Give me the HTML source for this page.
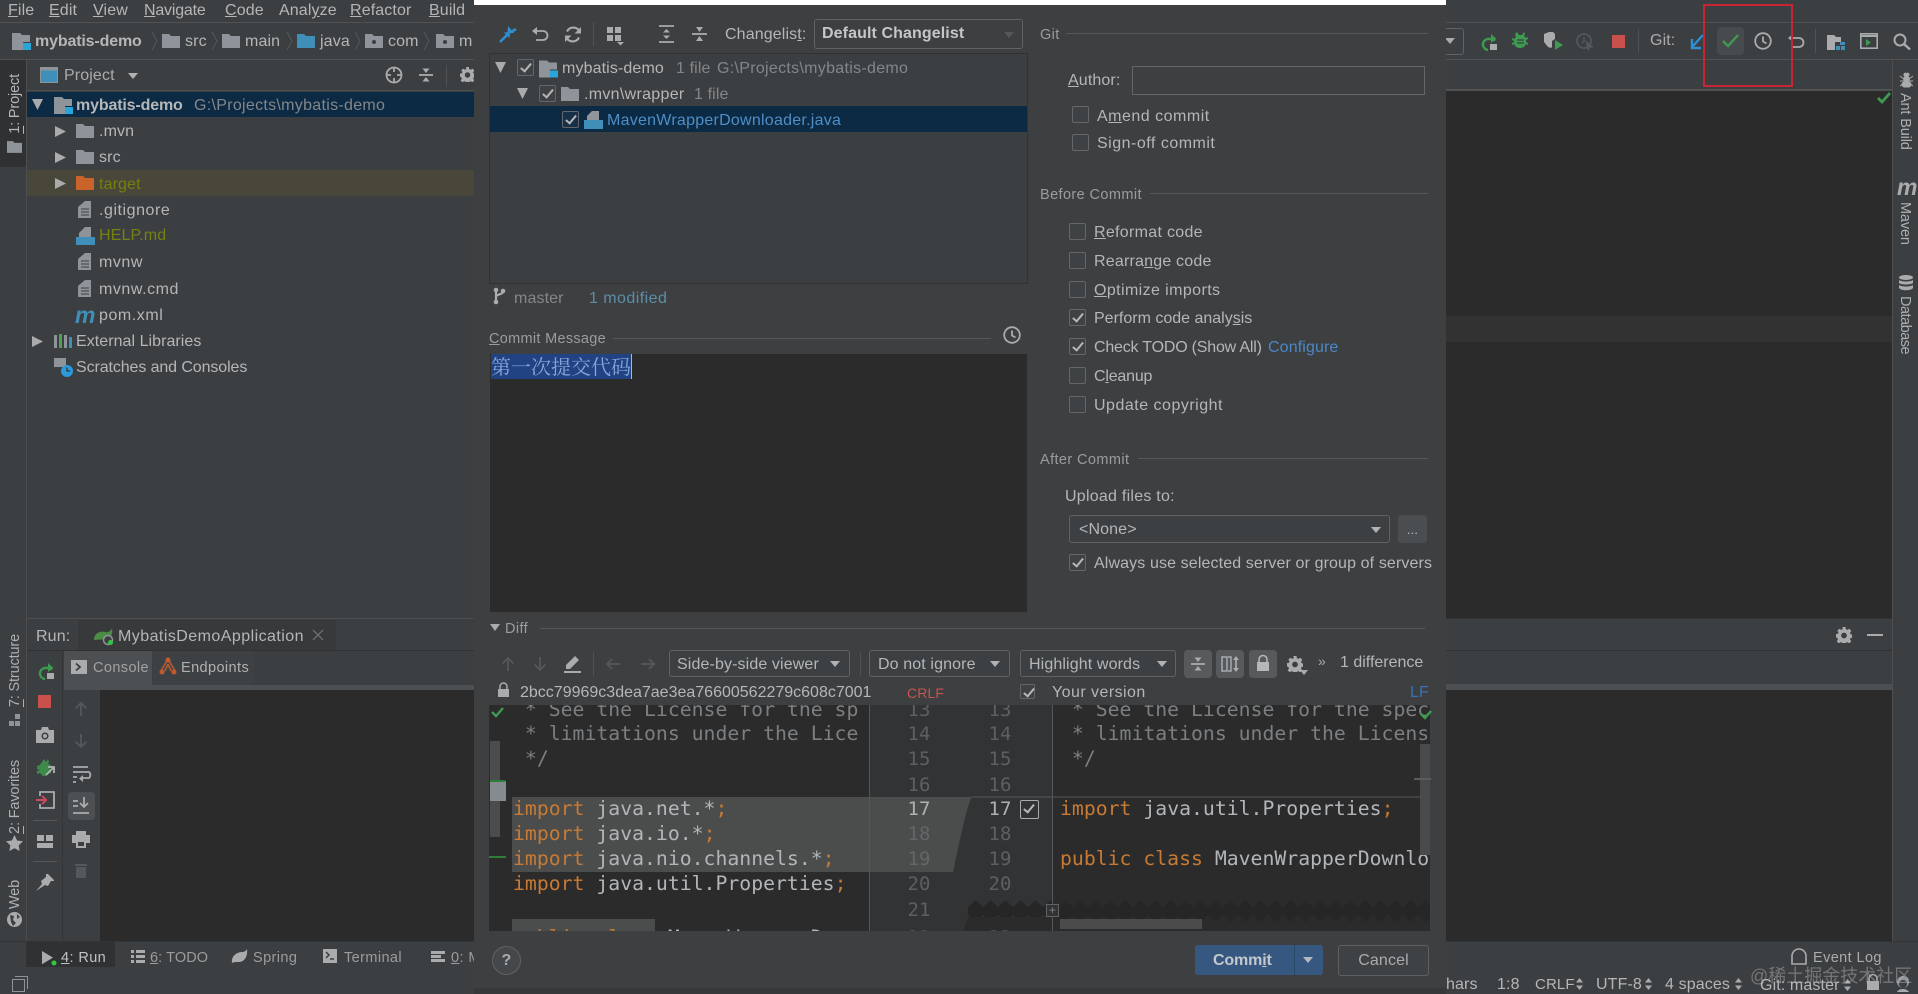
<!DOCTYPE html>
<html><head><meta charset="utf-8"><style>
html,body{margin:0;padding:0;width:1918px;height:994px;overflow:hidden;background:#3c3f41}
body{position:relative;font-family:"Liberation Sans","Noto Sans CJK SC",sans-serif;font-size:16px;letter-spacing:.12px;color:#b4b6b8}
.a{position:absolute}
.t{position:absolute;white-space:nowrap;line-height:20px;height:20px;margin-top:1px}
.b{font-weight:bold;letter-spacing:-.15px}
.s{font-size:14.500px;color:#9a9c9e;letter-spacing:.4px}
.g{color:#83878a;letter-spacing:.3px}
.w{letter-spacing:.55px}
.cb{position:absolute;width:15px;height:15px;border:1px solid #646669;border-radius:2px;background:#3f4244}
.cb.on::after{content:"";position:absolute;left:5px;top:1px;width:4px;height:9px;border-right:2px solid #b5b7b9;border-bottom:2px solid #b5b7b9;transform:rotate(40deg)}
.ln{position:absolute;height:1px;background:#555759}
.combo{position:absolute;box-sizing:border-box;border:1px solid #606264;border-radius:3px;background:#3d4042}
.arr{position:absolute;width:0;height:0;border-left:5px solid transparent;border-right:5px solid transparent;border-top:6px solid #b0b2b4}
.rt{position:absolute;white-space:nowrap;writing-mode:vertical-rl;line-height:20px;width:20px;font-size:14.500px;letter-spacing:-.15px;color:#aeb0b2}
.lt{transform:rotate(180deg)}
.tb{position:absolute;background:#565a5c;border-radius:4px}
svg.i{position:absolute;overflow:visible}
.clip{position:absolute;overflow:hidden}
.c{position:absolute;left:0;white-space:pre;font-family:"DejaVu Sans Mono",monospace;font-size:19.800px;letter-spacing:0;line-height:24px;height:24px;color:#b2b6ba}
.c i{font-style:normal;color:#c77a33}
.cm{color:#7c7f82}
.n{position:absolute;width:24px;text-align:center;font-family:"DejaVu Sans Mono",monospace;font-size:19px;letter-spacing:0;line-height:24px;color:#5c6063}
</style></head><body>
<svg width="0" height="0" style="position:absolute"><defs>
<symbol id="fo" viewBox="0 0 18 14"><path d="M0 0h7l2 2h9v12H0z" fill="#8e9499"/></symbol>
<symbol id="fb" viewBox="0 0 18 14"><path d="M0 0h7l2 2h9v12H0z" fill="#3f8fb8"/></symbol>
<symbol id="fp" viewBox="0 0 18 14"><path d="M0 0h7l2 2h9v12H0z" fill="#8e9499"/><circle cx="9" cy="8" r="2" fill="#3c3f41"/></symbol>
<symbol id="mod" viewBox="0 0 19 17"><path d="M0 0h8l2 2h8v7h-7v8H0z" fill="#8e9499"/><rect x="11" y="10" width="8" height="7" fill="#29a5d8"/></symbol>
<symbol id="file" viewBox="0 0 14 17"><path d="M7 0h6v17H0V6z" fill="#8e9499"/><path d="M3 8h8M3 11h8M3 14h8" stroke="#3c3f41"/></symbol>
<symbol id="gear" viewBox="0 0 16 16"><path fill-rule="evenodd" d="M6.500 0h3l.4 2.200 1.500.7L13.300 1.700l2 2.200-1.300 1.800.6 1.500 2.200.4v3l-2.200.4-.6 1.500 1.300 1.800-2 2.100-1.900-1.300-1.500.7-.4 2.200h-3l-.4-2.200-1.500-.7-1.900 1.300-2-2.100 1.300-1.800-.6-1.500L-.2 10.100v-3l2.200-.4.600-1.500L1.300 3.900l2-2.200 1.900 1.200 1.500-.7zM8 5.600a2.900 2.900 0 1 0 0 5.800 2.900 2.900 0 0 0 0-5.800z" fill="#a9abad"/></symbol>
<symbol id="co" viewBox="0 0 16 16"><path d="M1 8h14" stroke="#a9abad" stroke-width="1.800"/><path d="M8 6L4.500 1.500h7zM8 10l3.500 4.500h-7z" fill="#a9abad"/></symbol>
<symbol id="clk" viewBox="0 0 18 18"><circle cx="9" cy="9" r="7.800" fill="none" stroke="#a9abad" stroke-width="1.800"/><path d="M9 4.500V9.500l3.500 2" fill="none" stroke="#a9abad" stroke-width="1.800"/></symbol>
<symbol id="rr" viewBox="0 0 18 18"><path d="M14 8V6H9a5.500 5.500 0 0 0-1 11" fill="none" stroke="#3e9a50" stroke-width="2.400"/><path d="M11 1l5.500 5L11 10z" fill="#3e9a50"/><rect x="10" y="11" width="7" height="6" fill="#a9abad"/></symbol>
<symbol id="stop" viewBox="0 0 13 13"><rect width="13" height="13" fill="#c9504b"/></symbol>
<symbol id="up" viewBox="0 0 14 16"><path d="M7 15V2M1.500 7.500L7 2l5.500 5.500" fill="none" stroke="#55585a" stroke-width="1.800"/></symbol>
<symbol id="dn" viewBox="0 0 14 16"><path d="M7 1v13M1.500 8.500L7 14l5.500-5.500" fill="none" stroke="#55585a" stroke-width="1.800"/></symbol>
</defs></svg>

<!-- top menu -->
<div class="t" style="left:8px;top:0"><u>F</u>ile</div>
<div class="t" style="left:49px;top:0"><u>E</u>dit</div>
<div class="t" style="left:93px;top:0"><u>V</u>iew</div>
<div class="t" style="left:144px;top:0;letter-spacing:-.2px"><u>N</u>avigate</div>
<div class="t" style="left:225px;top:0"><u>C</u>ode</div>
<div class="t" style="left:279px;top:0">Anal<u>y</u>ze</div>
<div class="t" style="left:350px;top:0"><u>R</u>efactor</div>
<div class="t" style="left:429px;top:0"><u>B</u>uild</div>
<div class="ln" style="left:0;top:22px;width:1918px;background:#505254"></div>
<!-- breadcrumb -->
<svg class="i" style="left:12px;top:33px" width="19" height="17"><use href="#mod"/></svg>
<div class="t b" style="left:35px;top:31px">mybatis-demo</div>
<svg class="i" style="left:152px;top:32px" width="6" height="18"><path d="M0 0l5 9-5 9" fill="none" stroke="#55585a"/></svg>
<svg class="i" style="left:162px;top:34px" width="18" height="14"><use href="#fo"/></svg>
<div class="t" style="left:185px;top:31px">src</div>
<svg class="i" style="left:212px;top:32px" width="6" height="18"><path d="M0 0l5 9-5 9" fill="none" stroke="#55585a"/></svg>
<svg class="i" style="left:222px;top:34px" width="18" height="14"><use href="#fo"/></svg>
<div class="t" style="left:245px;top:31px">main</div>
<svg class="i" style="left:287px;top:32px" width="6" height="18"><path d="M0 0l5 9-5 9" fill="none" stroke="#55585a"/></svg>
<svg class="i" style="left:297px;top:34px" width="18" height="14"><use href="#fb"/></svg>
<div class="t" style="left:320px;top:31px">java</div>
<svg class="i" style="left:355px;top:32px" width="6" height="18"><path d="M0 0l5 9-5 9" fill="none" stroke="#55585a"/></svg>
<svg class="i" style="left:365px;top:34px" width="18" height="14"><use href="#fp"/></svg>
<div class="t" style="left:388px;top:31px">com</div>
<svg class="i" style="left:424px;top:32px" width="6" height="18"><path d="M0 0l5 9-5 9" fill="none" stroke="#55585a"/></svg>
<svg class="i" style="left:436px;top:34px" width="18" height="14"><use href="#fp"/></svg>
<div class="t" style="left:459px;top:31px">m</div>
<div class="ln" style="left:0;top:59px;width:1918px;background:#505254"></div>

<!-- left stripe -->
<div class="a" style="left:0;top:60px;width:26px;height:107px;background:#2f3133"></div>
<div class="a" style="left:26px;top:60px;width:1px;height:881px;background:#4c4e50"></div>
<div class="rt lt" style="left:5px;top:74px;color:#b4b6b8"><u>1</u>: Project</div>
<svg class="i" style="left:7px;top:141px" width="15" height="12"><use href="#fo"/></svg>
<div class="rt lt" style="left:5px;top:634px"><u>7</u>: Structure</div>
<svg class="i" style="left:8px;top:714px" width="13" height="13"><path d="M7 0h5v5H7zM1 7h5v5H1zM7 7h5v5H7z" fill="#8e9499"/></svg>
<div class="rt lt" style="left:5px;top:760px"><u>2</u>: Favorites</div>
<svg class="i" style="left:6px;top:835px" width="17" height="16"><path d="M8.500 0l2.600 5.500 5.900.8-4.300 4.100 1 5.600-5.200-2.800L3.300 16l1-5.600L0 6.300l5.900-.8z" fill="#a9abad"/></svg>
<div class="rt lt" style="left:5px;top:880px">Web</div>
<svg class="i" style="left:7px;top:912px" width="15" height="15"><circle cx="7.500" cy="7.500" r="7.500" fill="#a9abad"/><path d="M3 3l4 1-1 4 3 3-3 3-2-4zM10 2l3 3-3 2z" fill="#3c3f41"/></svg>

<!-- project header -->
<svg class="i" style="left:40px;top:67px" width="18" height="16"><rect x=".5" y=".5" width="17" height="15" fill="#3f8fb8" stroke="#8e9499"/><rect x=".5" y=".5" width="17" height="3" fill="#8e9499"/></svg>
<div class="t" style="left:64px;top:65px;color:#a9abad">Project</div>
<div class="arr" style="left:128px;top:73px"></div>
<svg class="i" style="left:385px;top:66px" width="18" height="18"><circle cx="9" cy="9" r="7.500" fill="none" stroke="#a9abad" stroke-width="1.800"/><path d="M9 1v5M9 12v5M1 9h5M12 9h5" stroke="#a9abad" stroke-width="1.800"/></svg>
<svg class="i" style="left:418px;top:67px" width="16" height="16"><use href="#co"/></svg>
<div class="a" style="left:446px;top:65px;width:1px;height:22px;background:#505254"></div>
<svg class="i" style="left:460px;top:67px" width="15" height="15"><use href="#gear"/></svg>
<div class="ln" style="left:27px;top:90px;width:447px;background:#4c4e50"></div>

<!-- project tree -->
<div class="a" style="left:27px;top:92px;width:447px;height:25px;background:#0c2a43"></div>
<div class="a" style="left:27px;top:170px;width:447px;height:26px;background:#49473a"></div>
<svg class="i" style="left:32px;top:99px" width="11" height="11"><path d="M0 0h11L5.500 11z" fill="#a9abad"/></svg>
<svg class="i" style="left:54px;top:97px" width="19" height="17"><use href="#mod"/></svg>
<div class="t b" style="left:76px;top:95px">mybatis-demo</div>
<div class="t g" style="left:194px;top:95px">G:\Projects\mybatis-demo</div>
<svg class="i" style="left:55px;top:126px" width="11" height="11"><path d="M0 0l11 5.500L0 11z" fill="#a9abad"/></svg>
<svg class="i" style="left:76px;top:124px" width="18" height="14"><use href="#fo"/></svg>
<div class="t" style="left:99px;top:121px">.mvn</div>
<svg class="i" style="left:55px;top:152px" width="11" height="11"><path d="M0 0l11 5.500L0 11z" fill="#a9abad"/></svg>
<svg class="i" style="left:76px;top:150px" width="18" height="14"><use href="#fo"/></svg>
<div class="t" style="left:99px;top:147px">src</div>
<svg class="i" style="left:55px;top:178px" width="11" height="11"><path d="M0 0l11 5.500L0 11z" fill="#a9abad"/></svg>
<svg class="i" style="left:76px;top:176px" width="18" height="14"><path d="M0 0h7l2 2h9v12H0z" fill="#c9632a"/></svg>
<div class="t" style="left:99px;top:174px;color:#75800f">target</div>
<svg class="i" style="left:78px;top:201px" width="14" height="17"><use href="#file"/></svg>
<div class="t w" style="left:99px;top:200px">.gitignore</div>
<svg class="i" style="left:76px;top:227px" width="19" height="18"><path d="M9 0h6v10H3V6z" fill="#8e9499"/><rect y="10" width="19" height="8" fill="#3f8fb8"/></svg>
<div class="t" style="left:99px;top:225px;color:#75800f">HELP.md</div>
<svg class="i" style="left:78px;top:253px" width="14" height="17"><use href="#file"/></svg>
<div class="t w" style="left:99px;top:252px">mvnw</div>
<svg class="i" style="left:78px;top:280px" width="14" height="17"><use href="#file"/></svg>
<div class="t w" style="left:99px;top:279px">mvnw.cmd</div>
<div class="t" style="left:75px;top:304px;font-size:23px;font-weight:bold;font-style:italic;color:#3f8fb8">m</div>
<div class="t w" style="left:99px;top:305px">pom.xml</div>
<svg class="i" style="left:32px;top:336px" width="11" height="11"><path d="M0 0l11 5.500L0 11z" fill="#a9abad"/></svg>
<svg class="i" style="left:54px;top:334px" width="18" height="14"><path d="M0 1h3v13H0z" fill="#8e9499"/><path d="M5 0h3v14H5z" fill="#4ea053"/><path d="M10 1h3v13h-3z" fill="#8e9499"/><path d="M15 3h3v11h-3z" fill="#3f8fb8"/></svg>
<div class="t" style="left:76px;top:331px;letter-spacing:.05px">External Libraries</div>
<svg class="i" style="left:54px;top:358px" width="19" height="19"><path d="M0 0h12v9H0z" fill="#8e9499"/><circle cx="13" cy="13" r="6" fill="#2a9bd8"/><path d="M13 9.500V13h3" stroke="#3c3f41" fill="none" stroke-width="1.400"/></svg>
<div class="t" style="left:76px;top:357px;letter-spacing:-.1px">Scratches and Consoles</div>

<!-- run panel -->
<div class="a" style="left:27px;top:618px;width:447px;height:1px;background:#4c4e50"></div>
<div class="a" style="left:78px;top:620px;width:258px;height:30px;background:#37393b"></div>
<div class="t" style="left:36px;top:626px">Run:</div>
<svg class="i" style="left:94px;top:628px" width="20" height="17"><path d="M0 12C0 4 8 3 11 4 14 5 17 3 18 0c1 6-1 10-5 11z" fill="#4c8c45"/><circle cx="14" cy="12" r="4.500" fill="#3c3f41" stroke="#8e9499" stroke-width="1.500"/><circle cx="16.500" cy="14.500" r="2.500" fill="#31c740"/></svg>
<div class="t" style="left:118px;top:626px;letter-spacing:.45px">MybatisDemoApplication</div>
<svg class="i" style="left:313px;top:630px" width="10" height="10"><path d="M0 0l10 10M10 0L0 10" stroke="#6c6e70" stroke-width="1.300"/></svg>
<div class="ln" style="left:27px;top:650px;width:447px;background:#303234"></div>
<div class="a" style="left:64px;top:651px;width:88px;height:34px;background:#4c5052"></div>
<div class="a" style="left:153px;top:651px;width:101px;height:34px;background:#3e4143"></div>
<div class="a" style="left:64px;top:685px;width:410px;height:5px;background:#4c5052"></div>
<svg class="i" style="left:71px;top:660px" width="16" height="14"><rect width="16" height="14" fill="#a9abad"/><path d="M5 3.500L9 7 5 10.500" fill="none" stroke="#3c3f41" stroke-width="1.800"/></svg>
<div class="t s" style="left:93px;top:657px;color:#a0a2a4">Console</div>
<svg class="i" style="left:159px;top:657px" width="18" height="18"><path d="M9 2L2 14M9 2l7 12M9 7l-3 7M9 7l3 7" stroke="#b85a30" stroke-width="1.600" fill="none"/><circle cx="9" cy="3" r="2.500" fill="#c25a30"/><circle cx="3" cy="15" r="2.500" fill="#c25a30"/><circle cx="15" cy="15" r="2.500" fill="#c25a30"/></svg>
<div class="t s" style="left:181px;top:657px;color:#aeb0b2">Endpoints</div>
<div class="a" style="left:100px;top:690px;width:374px;height:251px;background:#2b2b2b"></div>
<div class="a" style="left:62px;top:651px;width:1px;height:290px;background:#333537"></div>
<svg class="i" style="left:37px;top:662px" width="18" height="18"><use href="#rr"/></svg>
<svg class="i" style="left:38px;top:695px" width="13" height="13"><use href="#stop"/></svg>
<svg class="i" style="left:36px;top:727px" width="18" height="16"><path d="M0 3h5l1-3h6l1 3h5v13H0z" fill="#a9abad"/><circle cx="9" cy="9" r="3.500" fill="#3c3f41"/><circle cx="9" cy="9" r="2" fill="#a9abad"/></svg>
<svg class="i" style="left:37px;top:759px" width="18" height="18"><path d="M7 0l2 3 2-3 1 3-1 2 3 1v3l-2 1 2 1v3l-3 1-2 2H6L3 14l-3 1v-3l3-1-3-1V7l3-1z" fill="#3e8a4a"/><path d="M9 16l7-7M11 8h6v6" stroke="#b0b2b4" stroke-width="1.800" fill="none"/></svg>
<svg class="i" style="left:36px;top:791px" width="19" height="18"><path d="M4 5V1h14v16H4v-4" fill="none" stroke="#a9abad" stroke-width="1.800"/><path d="M0 9h9M6 5l4 4-4 4" fill="none" stroke="#c94a5a" stroke-width="2"/></svg>
<div class="ln" style="left:33px;top:820px;width:24px"></div>
<svg class="i" style="left:37px;top:835px" width="16" height="13"><path d="M0 0h7v6H0zM9 0h7v6H9zM0 8h16v5H0z" fill="#a9abad"/></svg>
<div class="ln" style="left:33px;top:861px;width:24px"></div>
<svg class="i" style="left:36px;top:873px" width="18" height="18"><path d="M0 18l6-7-1-3 5-4V1h2l6 6v1h-3l-3 5-3-1z" fill="#a9abad"/></svg>
<svg class="i" style="left:74px;top:701px" width="14" height="16"><use href="#up"/></svg>
<svg class="i" style="left:74px;top:733px" width="14" height="16"><use href="#dn"/></svg>
<svg class="i" style="left:73px;top:766px" width="17" height="17"><path d="M0 1h15M0 6h16v0a4 4 0 0 1 0 6h-7M0 11h4M0 16h3" fill="none" stroke="#a9abad" stroke-width="1.800"/><path d="M10 9l-4 3.500 4 3.500z" fill="#a9abad"/></svg>
<div class="tb" style="left:68px;top:792px;width:27px;height:28px;background:#4c5052"></div>
<svg class="i" style="left:73px;top:797px" width="17" height="17"><path d="M0 16h16M0 4h5M0 9h5M11 0v9M7 6l4 4 4-4" fill="none" stroke="#a9abad" stroke-width="1.800"/></svg>
<svg class="i" style="left:72px;top:831px" width="18" height="17"><path d="M4 0h10v4h4v8h-4v5H4v-5H0V4h4z" fill="#a9abad"/><rect x="6" y="11" width="6" height="4" fill="#3c3f41"/></svg>
<svg class="i" style="left:75px;top:862px" width="12" height="16"><path d="M0 2h12v2H0zM1 5h10v11H1z" fill="#55585a"/></svg>

<!-- bottom tool bar -->
<div class="ln" style="left:0;top:941px;width:1918px;background:#323436"></div>
<div class="a" style="left:26px;top:942px;width:89px;height:25px;background:#2f3133"></div>
<svg class="i" style="left:42px;top:951px" width="14" height="14"><path d="M0 0l10 6-10 6z" fill="#a9abad" transform="scale(1.100)"/><circle cx="12" cy="12" r="2.500" fill="#31c740"/></svg>
<div class="t s" style="left:61px;top:947px;color:#c0c2c4"><u>4</u>: Run</div>
<svg class="i" style="left:131px;top:950px" width="14" height="13"><path d="M0 0h3v3H0zM0 5h3v3H0zM0 10h3v3H0zM5 0h9v3H5zM5 5h9v3H5zM5 10h9v3H5z" fill="#a9abad"/></svg>
<div class="t s" style="left:150px;top:947px;letter-spacing:.1px"><u>6</u>: TODO</div>
<svg class="i" style="left:232px;top:949px" width="15" height="14"><path d="M0 14C-1 6 6 3 10 3c2 0 4-1 5-3 1 8-3 13-8 13-3 0-5 0-7 1z" fill="#a9abad"/></svg>
<div class="t s" style="left:253px;top:947px">Spring</div>
<svg class="i" style="left:323px;top:949px" width="14" height="14"><rect width="14" height="14" fill="#a9abad"/><path d="M3 3l3 3-3 3M7 10h4" fill="none" stroke="#3c3f41" stroke-width="1.500"/></svg>
<div class="t s" style="left:344px;top:947px">Terminal</div>
<svg class="i" style="left:431px;top:951px" width="14" height="12"><path d="M0 0h14v3H0zM0 4h10v3H0zM0 8h14v3H0z" fill="#a9abad"/></svg>
<div class="t s" style="left:451px;top:947px"><u>0</u>: M</div>
<svg class="i" style="left:12px;top:976px" width="16" height="16"><path d="M3 .5h12.500V13M.5 3.500h12v12H.5z" fill="none" stroke="#8e9499"/></svg>

<!-- editor right -->
<div class="a" style="left:1446px;top:91px;width:446px;height:527px;background:#2b2b2b"></div>
<div class="a" style="left:1446px;top:316px;width:446px;height:26px;background:#323232"></div>
<div class="a" style="left:1446px;top:618px;width:446px;height:1px;background:#323436"></div>
<div class="a" style="left:1446px;top:690px;width:446px;height:251px;background:#2b2b2b"></div>
<div class="a" style="left:1446px;top:684px;width:446px;height:6px;background:#4c5052"></div>
<div class="ln" style="left:1446px;top:650px;width:446px;background:#303234"></div>
<div class="ln" style="left:1446px;top:89px;width:446px;background:#505254;height:2px"></div>
<div class="a" style="left:1892px;top:60px;width:1px;height:881px;background:#4c4e50"></div>
<svg class="i" style="left:1877px;top:92px" width="14" height="12"><path d="M1 6l4 4 8-9" fill="none" stroke="#3e9a50" stroke-width="2.800"/></svg>

<!-- right toolbar -->
<div class="combo" style="left:1430px;top:28px;width:34px;height:27px"></div>
<div class="arr" style="left:1445px;top:38px;border-top-color:#a9abad"></div>
<svg class="i" style="left:1480px;top:33px" width="18" height="18"><use href="#rr"/></svg>
<svg class="i" style="left:1512px;top:32px" width="17" height="18"><path d="M5 0l2 3h3l2-3 1 2-1 2 2 2 2-1v2l-2 1v2l2 1v2l-2-1-2 3-3 1H7l-3-1-2-3-2 1v-2l2-1V9L0 8V6l2 1 2-2-1-3z" fill="#3e9a50"/><path d="M5 8h7M5 11h7" stroke="#3c3f41" stroke-width="1.200"/></svg>
<svg class="i" style="left:1544px;top:32px" width="19" height="18"><path d="M0 2l5-2h4l2 2v5l-3 2v6l-1 1-3-1-4-5z" fill="#a9abad"/><path d="M11 8l8 5-8 5z" fill="#3e9a50"/></svg>
<svg class="i" style="left:1576px;top:33px" width="19" height="18"><circle cx="8" cy="8" r="7" fill="none" stroke="#55585a" stroke-width="1.800"/><path d="M8 4v4l-2 2" stroke="#55585a" stroke-width="1.500" fill="none"/><path d="M9 7l9 7-4 1-2 3z" fill="#55585a"/></svg>
<svg class="i" style="left:1612px;top:35px" width="13" height="13"><use href="#stop"/></svg>
<div class="a" style="left:1638px;top:29px;width:1px;height:24px;background:#505254"></div>
<div class="t" style="left:1650px;top:30px;color:#a9abad">Git:</div>
<svg class="i" style="left:1690px;top:34px" width="14" height="15"><path d="M13 1L3 12M2 5v9h9" fill="none" stroke="#2f8fd0" stroke-width="2.400"/></svg>
<div class="a" style="left:1717px;top:27px;width:27px;height:28px;background:#484b4d;border-radius:4px"></div>
<svg class="i" style="left:1722px;top:34px" width="17" height="14"><path d="M1 7l5 5L16 1" fill="none" stroke="#3e9a50" stroke-width="2.400"/></svg>
<svg class="i" style="left:1754px;top:32px" width="18" height="18"><use href="#clk"/></svg>
<svg class="i" style="left:1788px;top:33px" width="17" height="16"><path d="M4 5h7a4.500 4.500 0 0 1 0 9H4" fill="none" stroke="#a9abad" stroke-width="1.800"/><path d="M5 1L0 5l5 4z" fill="#a9abad"/></svg>
<div class="a" style="left:1815px;top:29px;width:1px;height:24px;background:#505254"></div>
<svg class="i" style="left:1827px;top:34px" width="19" height="16"><path d="M0 1h7l2 2h5v5H8v8H0z" fill="#a9abad"/><path d="M13 8h5v3h-5zM9 12h4v4H9zM14 12h4v4h-4z" fill="#3f8fb8"/></svg>
<svg class="i" style="left:1860px;top:33px" width="18" height="16"><rect x=".8" y=".8" width="16.400" height="14.400" fill="none" stroke="#a9abad" stroke-width="1.600"/><path d="M1 3h16" stroke="#a9abad" stroke-width="2"/><path d="M6 6l5 3.500-5 3.500z" fill="#3e9a50"/></svg>
<svg class="i" style="left:1893px;top:33px" width="18" height="17"><circle cx="7" cy="7" r="5.500" fill="none" stroke="#a9abad" stroke-width="2"/><path d="M11 11l6 5.500" stroke="#a9abad" stroke-width="2.400"/></svg>

<!-- red highlight -->
<div class="a" style="left:1703px;top:4px;width:90px;height:83px;border:2px solid #c62533;box-sizing:border-box"></div>

<!-- right stripe -->
<svg class="i" style="left:1900px;top:73px" width="13" height="15"><path d="M6.500 0a2 2 0 0 1 2 3.500 3 3 0 0 1 0 5 3 3 0 0 1 0 6h-4a3 3 0 0 1 0-6 3 3 0 0 1 0-5 2 2 0 0 1 2-3.500z" fill="#a9abad"/><path d="M0 3l4 3M13 3L9 6M0 8h4M13 8H9M0 13l4-3M13 13l-4-3" stroke="#a9abad"/></svg>
<div class="rt" style="left:1895px;top:93px">Ant Build</div>
<div class="t" style="left:1897px;top:176px;font-size:23px;font-weight:bold;font-style:italic;color:#a9abad">m</div>
<div class="rt" style="left:1895px;top:202px">Maven</div>
<svg class="i" style="left:1899px;top:275px" width="14" height="16"><ellipse cx="7" cy="2.500" rx="7" ry="2.500" fill="#a9abad"/><path d="M0 5c2 2 12 2 14 0v3c-2 2-12 2-14 0zM0 10c2 2 12 2 14 0v3c-2 3-12 3-14 0z" fill="#a9abad"/></svg>
<div class="rt" style="left:1895px;top:296px;letter-spacing:-.5px">Database</div>

<!-- run header right -->
<svg class="i" style="left:1836px;top:627px" width="16" height="16"><use href="#gear"/></svg>
<div class="a" style="left:1867px;top:634px;width:16px;height:2px;background:#a9abad"></div>

<!-- status right -->
<svg class="i" style="left:1791px;top:948px" width="17" height="17"><path d="M1 16V8a7 7 0 0 1 14 0v8z" fill="none" stroke="#a9abad" stroke-width="1.600"/></svg>
<div class="t s" style="left:1813px;top:947px;color:#a9abad">Event Log</div>
<div class="t" style="left:1446px;top:974px">hars</div>
<div class="t" style="left:1497px;top:974px">1:8</div>
<div class="t" style="left:1535px;top:974px;font-size:15px">CRLF</div>
<div class="t" style="left:1596px;top:974px">UTF-8</div>
<div class="t" style="left:1665px;top:974px">4 spaces</div>
<div class="t" style="left:1760px;top:975px">Git: master</div>
<svg class="i" style="left:1576px;top:978px" width="7" height="12"><path d="M3.500 0L7 4.500H0zM3.500 12L7 7.500H0z" fill="#a9abad"/></svg>
<svg class="i" style="left:1645px;top:978px" width="7" height="12"><path d="M3.500 0L7 4.500H0zM3.500 12L7 7.500H0z" fill="#a9abad"/></svg>
<svg class="i" style="left:1735px;top:978px" width="7" height="12"><path d="M3.500 0L7 4.500H0zM3.500 12L7 7.500H0z" fill="#a9abad"/></svg>
<svg class="i" style="left:1844px;top:979px" width="7" height="12"><path d="M3.500 0L7 4.500H0zM3.500 12L7 7.500H0z" fill="#a9abad"/></svg>
<svg class="i" style="left:1867px;top:975px" width="12" height="15"><path d="M2 6V3.500a4 4 0 0 1 8 0V6" fill="none" stroke="#a9abad" stroke-width="1.600"/><rect y="6" width="12" height="9" fill="#a9abad"/></svg>
<svg class="i" style="left:1896px;top:975px" width="14" height="17"><circle cx="7" cy="7" r="6" fill="#8e9499"/><circle cx="7" cy="9" r="4" fill="#3c3f41"/><path d="M1 17c2-4 10-4 12 0z" fill="#a9abad"/></svg>
<div class="t" style="left:1750px;top:965px;font-size:18px;letter-spacing:0;color:rgba(205,205,205,.38)">@稀土掘金技术社区</div>

<!-- DIALOG -->
<div class="a" style="left:474px;top:0;width:972px;height:988px;background:#3d3f41"></div>
<div class="a" style="left:474px;top:0;width:972px;height:5px;background:#fff"></div>
<div class="a" style="left:474px;top:988px;width:972px;height:6px;background:#36383a"></div>

<!-- dialog toolbar -->
<svg class="i" style="left:499px;top:25px" width="18" height="18"><path d="M1 17l7-7" stroke="#2f8fd0" stroke-width="2.600"/><path d="M5 7.500l5.500 5.500L11 7z" fill="#2f8fd0"/><path d="M17 4l-5 3" stroke="#2f8fd0" stroke-width="2.600"/><path d="M9 1l-.5 7.500L15 8z" fill="#2f8fd0"/></svg>
<svg class="i" style="left:532px;top:26px" width="17" height="16"><path d="M4 5h7a4.500 4.500 0 0 1 0 9H4" fill="none" stroke="#a9abad" stroke-width="1.800"/><path d="M5 1L0 5l5 4z" fill="#a9abad"/></svg>
<svg class="i" style="left:565px;top:26px" width="16" height="17"><path d="M15 6.500A7 7 0 0 0 2 5.500M1 10.500a7 7 0 0 0 13 1" fill="none" stroke="#a9abad" stroke-width="2.200"/><path d="M9.500 7.500H16V1zM6.500 9.500H0V16z" fill="#a9abad"/></svg>
<div class="a" style="left:593px;top:22px;width:1px;height:24px;background:#505254"></div>
<svg class="i" style="left:607px;top:27px" width="18" height="19"><path d="M0 0h6v6H0zM8 0h6v6H8zM0 8h6v6H0zM8 8h6v6H8z" fill="#a9abad"/><path d="M10 15h7l-3.500 3.500z" fill="#a9abad"/></svg>
<svg class="i" style="left:659px;top:25px" width="15" height="18"><path d="M0 1h15M0 17h15" stroke="#a9abad" stroke-width="1.800"/><path d="M7.500 4l3.500 3.500H4zM7.500 14l3.500-3.500H4z" fill="#a9abad"/></svg>
<svg class="i" style="left:692px;top:25px" width="15" height="18"><path d="M0 9h15" stroke="#a9abad" stroke-width="1.800"/><path d="M7.500 7L4 2h7zM7.500 11L11 16H4z" fill="#a9abad"/></svg>
<div class="t" style="left:725px;top:24px">Changelis<u>t</u>:</div>
<div class="combo" style="left:814px;top:19px;width:209px;height:30px;background:#3d3f41"></div>
<div class="t b" style="left:822px;top:23px;color:#c4c6c8;letter-spacing:.1px">Default Changelist</div>
<div class="arr" style="left:1004px;top:32px;border-top-color:#55585a"></div>

<!-- tree box -->
<div class="a" style="left:489px;top:53px;width:537px;height:229px;border:1px solid #303234;background:#3c3f41"></div>
<div class="a" style="left:490px;top:106px;width:537px;height:26px;background:#0c2a43"></div>
<svg class="i" style="left:495px;top:62px" width="11" height="11"><path d="M0 0h11L5.500 11z" fill="#a9abad"/></svg>
<div class="cb on" style="left:517px;top:59px"></div>
<svg class="i" style="left:539px;top:60px" width="19" height="18"><use href="#mod"/></svg>
<div class="t" style="left:562px;top:58px">mybatis-demo</div>
<div class="t g" style="left:676px;top:58px;letter-spacing:.12px">1 file</div>
<div class="t g" style="left:717px;top:58px">G:\Projects\mybatis-demo</div>
<svg class="i" style="left:517px;top:88px" width="11" height="11"><path d="M0 0h11L5.500 11z" fill="#a9abad"/></svg>
<div class="cb on" style="left:539px;top:85px"></div>
<svg class="i" style="left:561px;top:87px" width="18" height="14"><use href="#fo"/></svg>
<div class="t" style="left:584px;top:84px;letter-spacing:.3px">.mvn\wrapper</div>
<div class="t g" style="left:694px;top:84px;letter-spacing:.12px">1 file</div>
<div class="cb on" style="left:562px;top:111px;background:#16304a"></div>
<svg class="i" style="left:584px;top:111px" width="19" height="18"><path d="M8 0h7v9H3V5z" fill="#8e9499"/><rect y="9" width="19" height="9" fill="#3f8fb8"/></svg>
<div class="t" style="left:607px;top:110px;color:#4f8ec7;letter-spacing:.25px">MavenWrapperDownloader.java</div>
<!-- branch -->
<svg class="i" style="left:493px;top:287px" width="13" height="18"><path d="M3 2v14M3 10c0-3 6-2 7-5" fill="none" stroke="#a9abad" stroke-width="2.200"/><circle cx="3" cy="3" r="2.300" fill="#a9abad"/><circle cx="3" cy="15" r="2.300" fill="#a9abad"/><circle cx="10" cy="4" r="2.300" fill="#a9abad"/></svg>
<div class="t g" style="left:514px;top:288px;letter-spacing:.12px">master</div>
<div class="t" style="left:589px;top:288px;color:#5d8ea8;letter-spacing:.45px">1 modified</div>
<!-- commit message -->
<div class="t s" style="left:489px;top:328px;letter-spacing:.3px"><u>C</u>ommit Message</div>
<div class="ln" style="left:613px;top:338px;width:378px"></div>
<svg class="i" style="left:1003px;top:326px" width="18" height="18"><use href="#clk"/></svg>
<div class="a" style="left:490px;top:354px;width:537px;height:258px;background:#2b2b2b"></div>
<div class="a" style="left:491px;top:354px;width:140px;height:25px;background:#214283"></div>
<div class="a" style="left:631px;top:354px;width:1px;height:25px;background:#b4b6b8"></div>
<div class="a" style="left:491px;top:353px;height:25px;line-height:25px;font-size:20px;letter-spacing:0;white-space:nowrap;color:#86a6d8;font-family:'Noto Serif CJK SC',serif">第一次提交代码</div>

<!-- right options -->
<div class="t s" style="left:1040px;top:24px">Git</div>
<div class="ln" style="left:1066px;top:33px;width:362px"></div>
<div class="t" style="left:1068px;top:70px"><u>A</u>uthor:</div>
<div class="a" style="left:1132px;top:66px;width:291px;height:27px;border:1px solid #646668;background:#3d3f41"></div>
<div class="cb" style="left:1072px;top:106px"></div>
<div class="t" style="left:1097px;top:106px;letter-spacing:.5px">A<u>m</u>end commit</div>
<div class="cb" style="left:1072px;top:134px"></div>
<div class="t" style="left:1097px;top:133px;letter-spacing:.5px">Si<u>g</u>n-off commit</div>
<div class="t s" style="left:1040px;top:184px">Before Commit</div>
<div class="ln" style="left:1150px;top:193px;width:278px"></div>
<div class="cb" style="left:1069px;top:223px"></div>
<div class="t" style="left:1094px;top:222px;letter-spacing:.3px"><u>R</u>eformat code</div>
<div class="cb" style="left:1069px;top:252px"></div>
<div class="t" style="left:1094px;top:251px;letter-spacing:.2px">Rearra<u>n</u>ge code</div>
<div class="cb" style="left:1069px;top:281px"></div>
<div class="t" style="left:1094px;top:280px;letter-spacing:.4px"><u>O</u>ptimize imports</div>
<div class="cb on" style="left:1069px;top:309px"></div>
<div class="t" style="left:1094px;top:308px;letter-spacing:0"><u></u>Perform code analy<u>s</u>is</div>
<div class="cb on" style="left:1069px;top:338px"></div>
<div class="t" style="left:1094px;top:337px;letter-spacing:-.2px">Check TODO (Show All)</div>
<div class="t" style="left:1268px;top:337px;color:#4a88c7">Configure</div>
<div class="cb" style="left:1069px;top:367px"></div>
<div class="t" style="left:1094px;top:366px;letter-spacing:-.2px">C<u>l</u>eanup</div>
<div class="cb" style="left:1069px;top:396px"></div>
<div class="t" style="left:1094px;top:395px;letter-spacing:.5px">Update copyright</div>
<div class="t s" style="left:1040px;top:449px">After Commit</div>
<div class="ln" style="left:1138px;top:458px;width:290px"></div>
<div class="t" style="left:1065px;top:486px;letter-spacing:.25px">Upload files to:</div>
<div class="combo" style="left:1069px;top:515px;width:321px;height:28px"></div>
<div class="t" style="left:1079px;top:519px">&lt;None&gt;</div>
<div class="arr" style="left:1371px;top:527px"></div>
<div class="a" style="left:1398px;top:515px;width:29px;height:28px;background:#4a4e50;border-radius:3px;color:#b4b6b8;text-align:center;line-height:30px;font-size:13px">...</div>
<div class="cb on" style="left:1069px;top:554px"></div>
<div class="t" style="left:1094px;top:553px">Always use selected server or group of servers</div>

<!-- diff header -->
<svg class="i" style="left:490px;top:624px" width="10" height="7"><path d="M0 0h10L5 7z" fill="#a9abad"/></svg>
<div class="t s" style="left:505px;top:618px">Diff</div>
<div class="ln" style="left:540px;top:628px;width:885px"></div>
<!-- diff toolbar -->
<svg class="i" style="left:501px;top:656px" width="14" height="16"><use href="#up"/></svg>
<svg class="i" style="left:533px;top:656px" width="14" height="16"><use href="#dn"/></svg>
<svg class="i" style="left:564px;top:655px" width="17" height="18"><path d="M2 10L11 1l4 4-9 9H2z" fill="#a9abad"/><path d="M0 17h17" stroke="#a9abad" stroke-width="2"/></svg>
<div class="a" style="left:593px;top:652px;width:1px;height:24px;background:#505254"></div>
<svg class="i" style="left:605px;top:658px" width="16" height="12"><path d="M15 6H2M7 1L2 6l5 5" fill="none" stroke="#55585a" stroke-width="1.800"/></svg>
<svg class="i" style="left:640px;top:658px" width="16" height="12"><path d="M1 6h13M9 1l5 5-5 5" fill="none" stroke="#55585a" stroke-width="1.800"/></svg>
<div class="combo" style="left:669px;top:650px;width:181px;height:27px"></div>
<div class="t" style="left:677px;top:654px">Side-by-side viewer</div>
<div class="arr" style="left:830px;top:661px"></div>
<div class="a" style="left:860px;top:652px;width:1px;height:24px;background:#505254"></div>
<div class="combo" style="left:869px;top:650px;width:141px;height:27px"></div>
<div class="t" style="left:878px;top:654px">Do not ignore</div>
<div class="arr" style="left:990px;top:661px"></div>
<div class="combo" style="left:1020px;top:650px;width:156px;height:27px"></div>
<div class="t" style="left:1029px;top:654px">Highlight words</div>
<div class="arr" style="left:1157px;top:661px"></div>
<div class="tb" style="left:1184px;top:650px;width:28px;height:28px"></div>
<svg class="i" style="left:1190px;top:656px" width="16" height="16"><use href="#co"/></svg>
<div class="tb" style="left:1216px;top:650px;width:28px;height:28px"></div>
<svg class="i" style="left:1221px;top:656px" width="18" height="16"><path d="M1 1h5v14H1zM7 1h3v14H7" fill="none" stroke="#a9abad" stroke-width="1.500"/><path d="M15 1v14" stroke="#a9abad" stroke-width="1.800"/><path d="M15 0l3 4h-6zM15 16l3-4h-6z" fill="#a9abad"/></svg>
<div class="tb" style="left:1249px;top:650px;width:28px;height:28px"></div>
<svg class="i" style="left:1257px;top:656px" width="12" height="15"><path d="M2 6V3.500a4 4 0 0 1 8 0V6" fill="none" stroke="#b4b6b8" stroke-width="1.600"/><rect y="6" width="12" height="9" fill="#b4b6b8"/></svg>
<svg class="i" style="left:1287px;top:656px" width="16" height="16"><use href="#gear"/></svg>
<svg class="i" style="left:1300px;top:670px" width="8" height="5"><path d="M0 0h8L4 5z" fill="#a9abad"/></svg>
<div class="t" style="left:1318px;top:650px;font-size:14px;color:#a9abad">»</div>
<div class="t" style="left:1340px;top:652px;letter-spacing:0">1 difference</div>
<!-- diff header line -->
<svg class="i" style="left:498px;top:683px" width="11" height="14"><path d="M2 6V3.500a3.500 3.500 0 0 1 7 0V6" fill="none" stroke="#a9abad" stroke-width="1.500"/><rect y="6" width="11" height="8" fill="#a9abad"/></svg>
<div class="t" style="left:520px;top:682px;letter-spacing:0">2bcc79969c3dea7ae3ea76600562279c608c7001</div>
<div class="t" style="left:907px;top:682px;color:#c75450;font-size:14px">CRLF</div>
<div class="cb on" style="left:1020px;top:684px;width:13px;height:13px"></div>
<div class="t" style="left:1052px;top:682px;letter-spacing:.45px">Your version</div>
<div class="t" style="left:1410px;top:682px;color:#3873b0">LF</div>

<!-- diff body -->
<div class="a" style="left:489px;top:705px;width:380px;height:226px;background:#2b2b2b"></div>
<div class="a" style="left:869px;top:705px;width:183px;height:226px;background:#313335"></div>
<div class="a" style="left:1052px;top:705px;width:378px;height:226px;background:#2b2b2b"></div>
<svg class="i" style="left:488px;top:705px" width="960" height="226">
<defs><pattern id="zz" x="0" y="195" width="15" height="22" patternUnits="userSpaceOnUse"><path d="M0 7L7.500 0 15 7v8L7.500 22 0 15z" fill="#262626"/></pattern></defs>
<path d="M24 92H484C479 100 473 130 465 167H24z" fill="#4b4d4d"/>
<path d="M484 92H942" stroke="#555759"/>
<rect x="480" y="195" width="84" height="22" fill="url(#zz)"/>
<path d="M475 226l5-14h84v14z" fill="#2b2b2b"/>
<rect x="565" y="195" width="377" height="22" fill="url(#zz)"/>
<rect x="24" y="214" width="143" height="12" fill="#4b4d4d"/>
<rect x="2" y="36" width="10" height="96" fill="#4b4d4d"/>
<rect x="2" y="76" width="16" height="20" fill="#868b90"/>
<rect x="2" y="75" width="15" height="2" fill="#2f7d3a"/>
<rect x="1" y="151" width="17" height="2" fill="#2f7d3a"/>
<path d="M4 7l4 4 7-8" fill="none" stroke="#3e9a50" stroke-width="2.400"/>
<rect x="572" y="214" width="142" height="10" fill="#4b4b4b"/>
<rect x="381" y="0" width="1" height="226" fill="#555759"/>
<rect x="564" y="0" width="1" height="226" fill="#555759"/>
</svg>
<div class="clip" style="left:513px;top:705px;width:346px;height:226px">
<div class="c cm" style="top:-7px"> * See the License for the sp</div>
<div class="c cm" style="top:17px"> * limitations under the Lice</div>
<div class="c cm" style="top:42px"> */</div>
<div class="c" style="top:92px"><i>import</i> java.net.*<i>;</i></div>
<div class="c" style="top:117px"><i>import</i> java.io.*<i>;</i></div>
<div class="c" style="top:142px"><i>import</i> java.nio.channels.*<i>;</i></div>
<div class="c" style="top:167px"><i>import</i> java.util.Properties<i>;</i></div>
<div class="c" style="top:221px"><i>public class</i> MavenWrapperDown</div>
</div>
<div class="clip" style="left:1060px;top:705px;width:370px;height:226px">
<div class="c cm" style="top:-7px"> * See the License for the spec</div>
<div class="c cm" style="top:17px"> * limitations under the Licens</div>
<div class="c cm" style="top:42px"> */</div>
<div class="c" style="top:92px"><i>import</i> java.util.Properties<i>;</i></div>
<div class="c" style="top:142px"><i>public class</i> MavenWrapperDownlo</div>
</div>
<svg class="i" style="left:1420px;top:705px" width="14" height="226"><rect x="0" y="39" width="10" height="111" fill="#4a4a4a"/><path d="M1 9l4 4 6-7" fill="none" stroke="#3e9a50" stroke-width="2.400"/></svg>
<div class="a" style="left:1414px;top:778px;width:17px;height:2px;background:#5a5c5e"></div>
<div class="clip" style="left:869px;top:705px;width:183px;height:226px">
<div class="n" style="left:38px;top:-7px">13</div><div class="n" style="left:119px;top:-7px">13</div>
<div class="n" style="left:38px;top:17px">14</div><div class="n" style="left:119px;top:17px">14</div>
<div class="n" style="left:38px;top:42px">15</div><div class="n" style="left:119px;top:42px">15</div>
<div class="n" style="left:38px;top:68px">16</div><div class="n" style="left:119px;top:68px">16</div>
<div class="n" style="left:38px;top:92px;color:#aeb0b2">17</div><div class="n" style="left:119px;top:92px;color:#aeb0b2">17</div>
<div class="n" style="left:38px;top:117px;color:#636668">18</div><div class="n" style="left:119px;top:117px">18</div>
<div class="n" style="left:38px;top:142px;color:#636668">19</div><div class="n" style="left:119px;top:142px">19</div>
<div class="n" style="left:38px;top:167px">20</div><div class="n" style="left:119px;top:167px">20</div>
<div class="n" style="left:38px;top:193px">21</div>
<div class="n" style="left:38px;top:221px">22</div><div class="n" style="left:119px;top:221px">22</div>
</div>
<div class="cb on" style="left:1020px;top:800px;width:17px;height:17px;background:#313335;border-color:#a9abad"></div>
<div class="a" style="left:1046px;top:904px;width:11px;height:11px;border:1px solid #606264;background:#313335;color:#808284;font-size:12px;line-height:10px;text-align:center">+</div>

<!-- footer -->
<div class="a" style="left:492px;top:946px;width:27px;height:27px;border:1px solid #606264;border-radius:50%;background:#45484a;color:#a9abad;text-align:center;font-weight:bold;line-height:27px;font-size:16px">?</div>
<div class="a" style="left:1195px;top:945px;width:128px;height:30px;background:#365880;border-radius:3px"></div>
<div class="a" style="left:1294px;top:945px;width:1px;height:30px;background:#2b4766"></div>
<div class="t b" style="left:1213px;top:950px;color:#c4c8cc">Comm<u>i</u>t</div>
<div class="arr" style="left:1303px;top:957px;border-top-color:#b4b8bc"></div>
<div class="a" style="left:1338px;top:945px;width:89px;height:29px;border:1px solid #5e6062;border-radius:3px;background:#3f4244;text-align:center;line-height:30px;color:#a9abad">Cancel</div>
</body></html>
